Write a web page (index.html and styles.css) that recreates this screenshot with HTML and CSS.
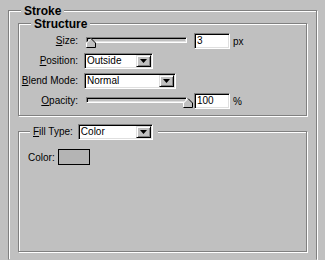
FILE: index.html
```html
<!DOCTYPE html>
<html lang="en">
<head>
  <meta charset="UTF-8">
  <title>Stroke</title>
  <link rel="stylesheet" href="styles.css">
</head>
<body>

<div class="group outer">
  <div class="group-title">Stroke</div>

  <div class="group structure">
    <div class="group-title">Structure</div>

    <div class="rows">
      <div class="label"><u>S</u>ize:</div>
      <div class="controls">
        <div class="slider">
          <div class="track"></div>
          <svg class="thumb thumb-min" width="10" height="10" viewBox="0 0 10 10">
            <polygon points="5,0.5 9.5,5 9.5,9.5 0.5,9.5 0.5,5" fill="#c0c0c0"/>
            <polyline points="0.5,9 0.5,5 5,0.5" fill="none" stroke="#fff"/>
            <polyline points="5,0.5 9.5,5 9.5,9.5 0.5,9.5" fill="none" stroke="#000"/>
          </svg>
        </div>
        <div class="num">3</div>
        <span class="unit">px</span>
      </div>

      <div class="label"><u>P</u>osition:</div>
      <div class="controls">
        <div class="select pos-select">
          <span class="select-text">Outside</span>
          <span class="drop"><svg width="7" height="4" viewBox="0 0 7 4"><polygon points="0,0 7,0 3.5,4" fill="#000"/></svg></span>
        </div>
      </div>

      <div class="label"><u>B</u>lend Mode:</div>
      <div class="controls">
        <div class="select blend-select">
          <span class="select-text">Normal</span>
          <span class="drop"><svg width="7" height="4" viewBox="0 0 7 4"><polygon points="0,0 7,0 3.5,4" fill="#000"/></svg></span>
        </div>
      </div>

      <div class="label"><u>O</u>pacity:</div>
      <div class="controls">
        <div class="slider">
          <div class="track"></div>
          <svg class="thumb thumb-max" width="10" height="10" viewBox="0 0 10 10">
            <polygon points="5,0.5 9.5,5 9.5,9.5 0.5,9.5 0.5,5" fill="#c0c0c0"/>
            <polyline points="0.5,9 0.5,5 5,0.5" fill="none" stroke="#fff"/>
            <polyline points="5,0.5 9.5,5 9.5,9.5 0.5,9.5" fill="none" stroke="#000"/>
          </svg>
        </div>
        <div class="num">100</div>
        <span class="unit">%</span>
      </div>
    </div>
  </div>

  <div class="group fill">
    <div class="group-title fill-title">
      <span><u>F</u>ill Type:</span>
      <div class="select fill-select">
        <span class="select-text">Color</span>
        <span class="drop"><svg width="7" height="4" viewBox="0 0 7 4"><polygon points="0,0 7,0 3.5,4" fill="#000"/></svg></span>
      </div>
    </div>

    <div class="color-row">
      <span>Color:</span>
      <div class="swatch"></div>
    </div>
  </div>
</div>

</body>
</html>
```

FILE: styles.css
```css
* {
  box-sizing: border-box;
}

html, body {
  height: 100%;
  overflow: hidden;
}

body {
  margin: 0;
  padding: 10px 0 0 8px;
  background-color: #c0c0c0;
  font-family: "Liberation Sans", Arial, sans-serif;
  font-size: 10px;
  color: #000;
}

u {
  text-decoration: underline;
  text-underline-offset: 1px;
}

/* etched group boxes */
.group {
  position: relative;
  border: 1px solid #808080;
  box-shadow: inset 1px 1px 0 #fff, 1px 1px 0 #fff;
}

.group-title {
  position: absolute;
  top: -7px;
  left: 12px;
  padding: 0 3px;
  background-color: #c0c0c0;
  font-size: 12px;
  font-weight: bold;
  line-height: 14px;
}

.outer {
  width: 309px;
  height: 250px;
  padding: 12px 9px 0;
  display: flex;
  flex-direction: column;
  gap: 15px;
  border-bottom-color: transparent;
}

.structure {
  height: 93px;
  padding-top: 9px;
  flex-shrink: 0;
}

.fill {
  height: 121px;
  flex-shrink: 0;
}

.rows {
  display: grid;
  grid-template-columns: 59px auto;
  grid-auto-rows: 16px;
  column-gap: 7px;
  row-gap: 4px;
}

.label {
  text-align: right;
  line-height: 16px;
  white-space: nowrap;
}

.controls {
  display: flex;
  align-items: center;
}

/* trackbar */
.slider {
  position: relative;
  width: 106px;
  height: 16px;
  margin-left: 1px;
}

.track {
  width: 101px;
  height: 6px;
  margin-top: 4px;
  border-top: 1px solid #808080;
  border-left: 1px solid #808080;
  border-right: 1px solid #fff;
  border-bottom: 1px solid #fff;
  box-shadow: inset 1px 1px 0 #000, inset -1px -1px 0 #dfdfdf;
}

.thumb {
  position: absolute;
  top: 5px;
  display: block;
}

.thumb-min {
  left: 0;
}

.thumb-max {
  left: 97px;
}

/* sunken fields */
.num, .select {
  height: 16px;
  background-color: #fff;
  border-top: 1px solid #808080;
  border-left: 1px solid #808080;
  border-right: 1px solid #fff;
  border-bottom: 1px solid #fff;
  box-shadow: inset 1px 1px 0 #000, inset -1px -1px 0 #dfdfdf;
}

.num {
  width: 36px;
  margin-left: 2px;
  padding-left: 2px;
  line-height: 14px;
}

.unit {
  margin-left: 3px;
}

.select {
  display: flex;
  align-items: stretch;
  margin-left: -1px;
}

.select-text {
  flex: 1;
  padding-left: 2px;
  line-height: 14px;
}

.drop {
  width: 15px;
  margin: 1px;
  display: flex;
  align-items: center;
  justify-content: center;
  background-color: #c0c0c0;
  border-top: 1px solid #dfdfdf;
  border-left: 1px solid #dfdfdf;
  border-right: 1px solid #000;
  border-bottom: 1px solid #000;
  box-shadow: inset 1px 1px 0 #fff, inset -1px -1px 0 #808080;
}

.pos-select {
  width: 69px;
}

.blend-select {
  width: 92px;
}

.fill-select {
  width: 75px;
  margin-left: 0;
}

.fill-title {
  top: -8px;
  left: 11px;
  padding: 0 5px 0 3px;
  display: flex;
  align-items: center;
  gap: 5px;
  font-size: 10px;
  font-weight: normal;
  line-height: 16px;
}

.color-row {
  display: flex;
  align-items: center;
  gap: 3px;
  padding: 17px 0 0 9px;
}

.swatch {
  width: 32px;
  height: 16px;
  border: 1px solid #000;
  background-color: #b4b4b4;
}
```
